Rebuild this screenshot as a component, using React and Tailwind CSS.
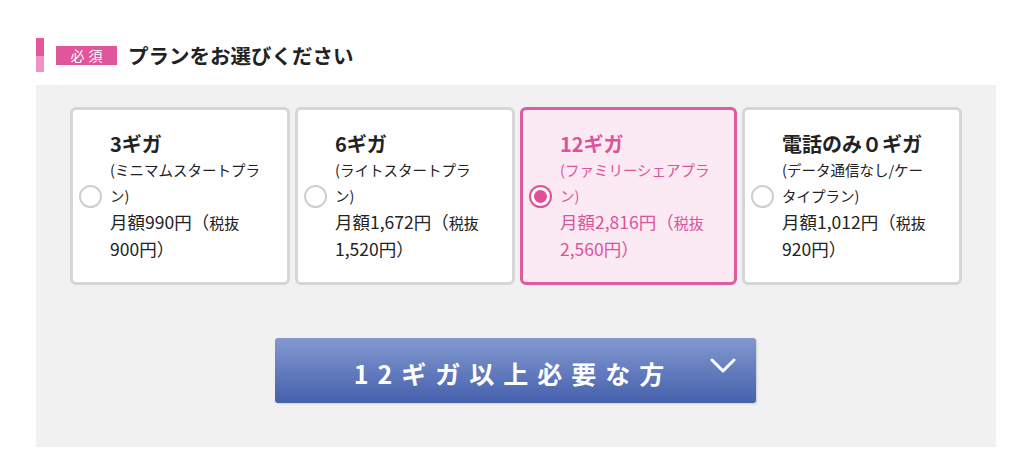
const plans = [
  { id: "3", name: "3ギガ", sub: ["(ミニマムスタートプラ", "ン)"], price: "月額990円", tax: "900円）" },
  { id: "6", name: "6ギガ", sub: ["(ライトスタートプラ", "ン)"], price: "月額1,672円", tax: "1,520円）" },
  { id: "12", name: "12ギガ", sub: ["(ファミリーシェアプラ", "ン)"], price: "月額2,816円", tax: "2,560円）" },
  { id: "0", name: "電話のみ０ギガ", sub: ["(データ通信なし/ケー", "タイプラン)"], price: "月額1,012円", tax: "920円）" },
];

const PlanCard = ({ plan, selected }) => (
  <div
    className={
      selected
        ? "w-[217px] h-[178px] rounded-[6px] border-[3px] border-[#df5b9f] bg-[#fbe9f3] flex items-center pl-[6px] text-[#db5499]"
        : "w-[220px] h-[178px] rounded-[6px] border-[3px] border-[#d6d6d6] bg-white flex items-center pl-[6px] text-[#222]"
    }
  >
    {selected ? (
      <div className="w-[23px] h-[23px] shrink-0 rounded-full border-[2px] border-[#e0509a] bg-white flex items-center justify-center">
        <div className="w-[13px] h-[13px] rounded-full bg-[#e0509a]" />
      </div>
    ) : (
      <div className="w-[23px] h-[23px] shrink-0 rounded-full border-[2px] border-[#cfcfcf] bg-white" />
    )}
    <div className="ml-[8px] whitespace-nowrap">
      <div className="text-[20px] font-bold leading-[26px]">{plan.name}</div>
      <div className="text-[14.5px] leading-[26px]">
        {plan.sub[0]}
        <br />
        {plan.sub[1]}
      </div>
      <div className="text-[17.5px] leading-[26px]">
        {plan.price}（<span className="text-[15px]">税抜</span>
        <br />
        {plan.tax}
      </div>
    </div>
  </div>
);

const App = () => {
  return (
    <div className="w-[1031px] h-[460px] bg-white pt-[38px] pl-[36px] font-['Noto_Sans_CJK_JP','Noto_Sans',sans-serif]">
      <div className="flex items-center h-[34px]">
        <div className="w-[8px] h-[34px] flex flex-col">
          <div className="h-[18px] bg-[#e4579d]" />
          <div className="h-[16px] bg-[#f093c3]" />
        </div>
        <div className="ml-[12px] w-[61px] h-[19px] bg-[#e0559c] text-white text-[14px] leading-[19px] text-center tracking-[4px] pl-[4px]">
          必須
        </div>
        <h2 className="ml-[11px] text-[20.5px] font-bold text-[#222]">プランをお選びください</h2>
      </div>
      <div className="mt-[13px] w-[960px] h-[362px] bg-[#f1f1f1] pt-[22px] pl-[34px]">
        <div className="flex gap-[5px]">
          {plans.map((p) => (
            <PlanCard key={p.id} plan={p} selected={p.id === "12"} />
          ))}
        </div>
        <div className="mt-[53px] ml-[205px] w-[481px] h-[65px] rounded-[3px] bg-gradient-to-b from-[#8399cf] to-[#4660ad] shadow-[1px_1px_2px_rgba(0,0,0,0.15)] relative flex items-center justify-center">
          <span className="text-white text-[25px] font-bold tracking-[9px] ml-[-4px] mt-[6px]">12ギガ以上必要な方</span>
          <svg
            className="absolute right-[20px] top-[20px]"
            width="26"
            height="16"
            viewBox="0 0 26 16"
            fill="none"
            stroke="white"
            strokeWidth="3"
            strokeLinecap="round"
            strokeLinejoin="round"
          >
            <path d="M2 2 L13 13 L24 2" />
          </svg>
        </div>
      </div>
    </div>
  );
};

export default App;
